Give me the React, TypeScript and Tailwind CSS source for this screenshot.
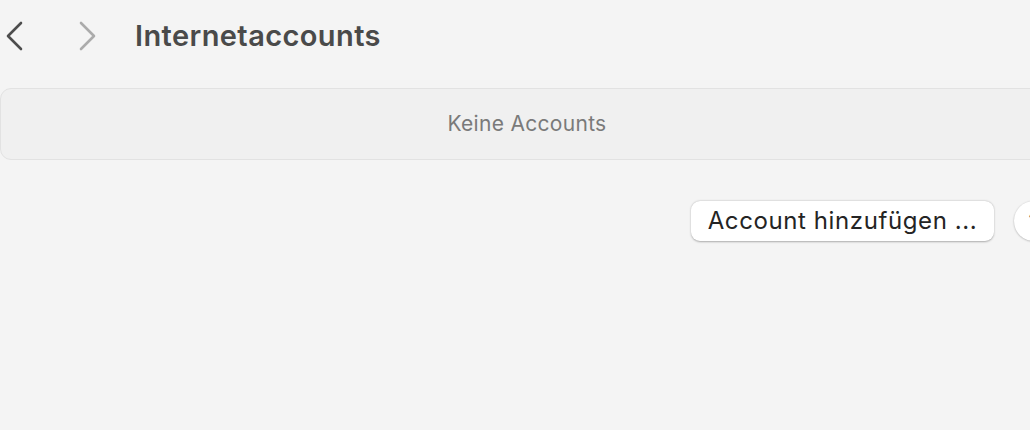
export default function App() {
  return (
    <div className="w-[1030px] h-[430px] overflow-hidden bg-[#f4f4f4] font-['Inter',sans-serif]">
      <div className="w-[1054px]">
        <div className="flex items-center h-[72px]">
          <button className="w-[20px] h-[30px] ml-[4px] flex items-center justify-center">
            <svg width="18" height="30" viewBox="0 0 18 30" fill="none">
              <path d="M16 2 L3 15 L16 28" stroke="#4d4d4d" strokeWidth="2.6" strokeLinecap="round" strokeLinejoin="round" />
            </svg>
          </button>
          <button className="w-[20px] h-[30px] ml-[54px] flex items-center justify-center">
            <svg width="18" height="30" viewBox="0 0 18 30" fill="none">
              <path d="M2 2 L15 15 L2 28" stroke="#ababab" strokeWidth="2.6" strokeLinecap="round" strokeLinejoin="round" />
            </svg>
          </button>
          <h1 className="ml-[37px] text-[29px] font-semibold text-[#4a4a4a] tracking-[0.4px] pb-[1px]">Internetaccounts</h1>
        </div>
        <div className="mt-[16px] h-[72px] rounded-[11px] border border-[#e2e2e2] bg-[#f0f0f0] flex items-center justify-center">
          <span className="text-[21px] text-[#7a7a7a] tracking-[0.3px]">Keine Accounts</span>
        </div>
        <div className="mt-[41px] flex justify-end items-center gap-[20px]">
          <button className="h-[40px] w-[303px] rounded-[9px] bg-white text-[24px] text-[#242424] tracking-[0.6px] shadow-[0_0.5px_2px_rgba(0,0,0,0.3)] flex items-center justify-center">
            Account hinzufügen ...
          </button>
          <button className="h-[40px] w-[40px] rounded-full bg-white text-[22px] text-[#555] shadow-[0_0.5px_2px_rgba(0,0,0,0.3)] flex items-center justify-center">
            ?
          </button>
        </div>
      </div>
    </div>
  );
}
